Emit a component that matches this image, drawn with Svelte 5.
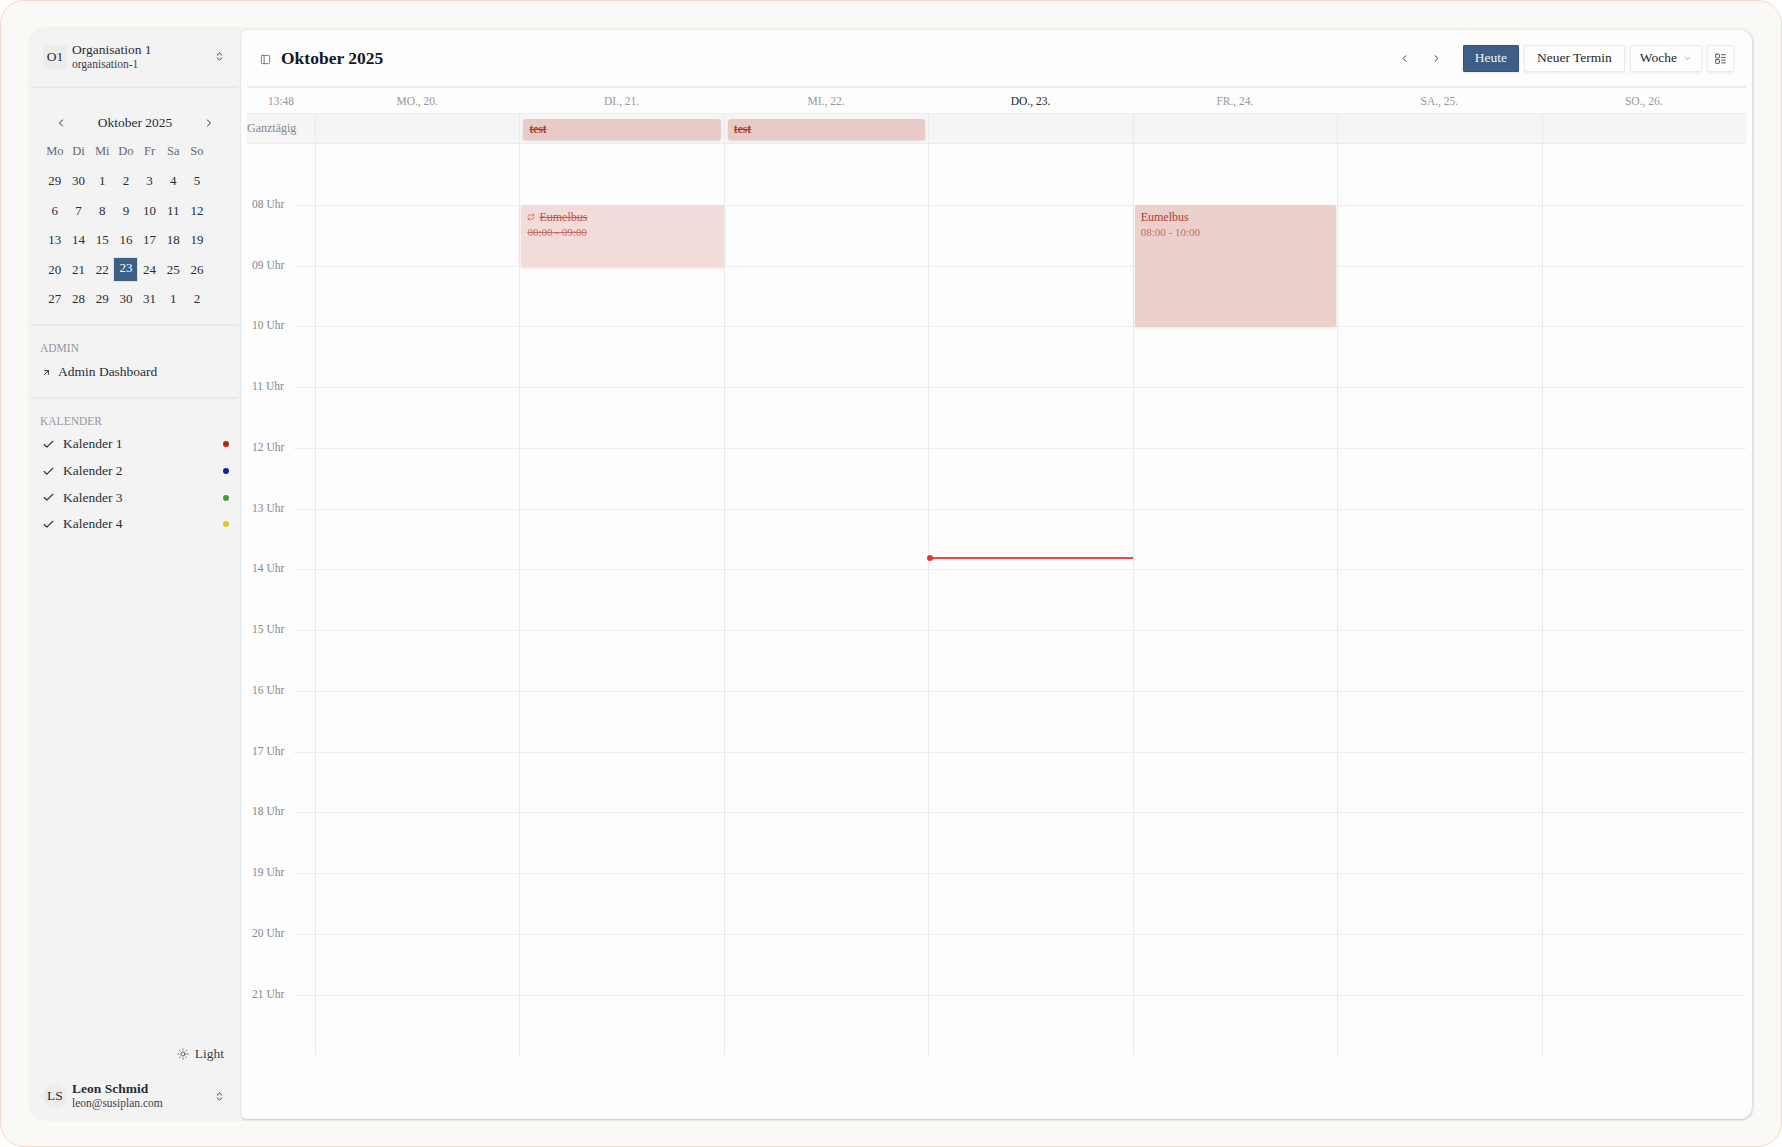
<script>
  const weekdays = ["Mo", "Di", "Mi", "Do", "Fr", "Sa", "So"]
  const weeks = [
    [29, 30, 1, 2, 3, 4, 5],
    [6, 7, 8, 9, 10, 11, 12],
    [13, 14, 15, 16, 17, 18, 19],
    [20, 21, 22, 23, 24, 25, 26],
    [27, 28, 29, 30, 31, 1, 2],
  ]
  const calendars = [
    { name: "Kalender 1", color: "#b5230f" },
    { name: "Kalender 2", color: "#0f1fa8" },
    { name: "Kalender 3", color: "#3fa52a" },
    { name: "Kalender 4", color: "#e2c521" },
  ]
  const days = [
    { label: "Mo., 20." },
    { label: "Di., 21.", allDay: true, events: [{ title: "Eumelbus", time: "08:00 - 09:00", start: 8, end: 9, cancelled: true }] },
    { label: "Mi., 22.", allDay: true },
    { label: "Do., 23.", today: true, now: 13.8 },
    { label: "Fr., 24.", events: [{ title: "Eumelbus", time: "08:00 - 10:00", start: 8, end: 10 }] },
    { label: "Sa., 25." },
    { label: "So., 26." },
  ]
  // grid starts at 07 Uhr, one row per hour
  const hours = Array.from({ length: 15 }, (_, i) => i + 7)
  const rowHeight = 60.75
  const top = (h) => (h - 7) * rowHeight
  const pad = (h) => String(h).padStart(2, "0")
</script>

<div class="frame">
  <div class="shell">
    <aside class="sidebar">
      <div class="switcher org">
        <span class="avatar">O1</span>
        <div class="who">
          <span class="who-name">Organisation 1</span>
          <span class="who-sub">organisation-1</span>
        </div>
        <svg class="updown" viewBox="0 0 24 24"><path d="m7 15 5 5 5-5M7 9l5-5 5 5" /></svg>
      </div>

      <section class="month">
        <div class="month-head">
          <svg class="nav-icon" viewBox="0 0 24 24"><path d="m15 18-6-6 6-6" /></svg>
          <span>Oktober 2025</span>
          <svg class="nav-icon" viewBox="0 0 24 24"><path d="m9 18 6-6-6-6" /></svg>
        </div>
        <div class="month-grid">
          {#each weekdays as d}
            <span class="wd">{d}</span>
          {/each}
          {#each weeks as week}
            {#each week as n}
              <span class="date" class:selected={n === 23}>{n}</span>
            {/each}
          {/each}
        </div>
      </section>

      <section class="group admin">
        <h4>Admin</h4>
        <div class="link">
          <svg viewBox="0 0 24 24"><path d="M7 7h10v10M7 17 17 7" /></svg>
          Admin Dashboard
        </div>
      </section>

      <section class="group cals">
        <h4>Kalender</h4>
        {#each calendars as cal}
          <div class="cal">
            <svg viewBox="0 0 24 24"><path d="M20 6 9 17l-5-5" /></svg>
            <span>{cal.name}</span>
            <i style="background: {cal.color}"></i>
          </div>
        {/each}
      </section>

      <div class="theme">
        <svg viewBox="0 0 24 24">
          <circle cx="12" cy="12" r="4" />
          <path d="M12 2v2M12 20v2M4.9 4.9l1.4 1.4M17.7 17.7l1.4 1.4M2 12h2M20 12h2M6.3 17.7l-1.4 1.4M19.1 4.9l-1.4 1.4" />
        </svg>
        Light
      </div>

      <div class="switcher user">
        <span class="avatar round">LS</span>
        <div class="who">
          <span class="who-name bold">Leon Schmid</span>
          <span class="who-sub">leon@susiplan.com</span>
        </div>
        <svg class="updown" viewBox="0 0 24 24"><path d="m7 15 5 5 5-5M7 9l5-5 5 5" /></svg>
      </div>
    </aside>

    <main class="main">
      <header class="top">
        <svg class="panel" viewBox="0 0 24 24">
          <rect x="3" y="3" width="18" height="18" rx="2" />
          <path d="M9 3v18" />
        </svg>
        <h1>Oktober 2025</h1>
        <div class="actions">
          <svg class="nav-icon" viewBox="0 0 24 24"><path d="m15 18-6-6 6-6" /></svg>
          <svg class="nav-icon" viewBox="0 0 24 24"><path d="m9 18 6-6-6-6" /></svg>
          <button class="btn primary">Heute</button>
          <button class="btn">Neuer Termin</button>
          <button class="btn woche">
            Woche
            <svg viewBox="0 0 24 24"><path d="m6 9 6 6 6-6" /></svg>
          </button>
          <button class="btn square" aria-label="Ansicht">
            <svg viewBox="0 0 24 24">
              <rect x="3" y="4" width="7" height="7" rx="1" />
              <rect x="3" y="14" width="7" height="7" rx="1" />
              <path d="M14 5h7M14 10h7M14 15h7M14 20h7" />
            </svg>
          </button>
        </div>
      </header>

      <div class="week">
        <div class="row day-row">
          <span class="clock">13:48</span>
          {#each days as day}
            <span class="day-label" class:today={day.today}>{day.label}</span>
          {/each}
        </div>

        <div class="row allday-row">
          <span class="allday-label">Ganztägig</span>
          {#each days as day}
            <div class="allday-cell">
              {#if day.allDay}
                <div class="allday-event">test</div>
              {/if}
            </div>
          {/each}
        </div>

        <div class="row body">
          <div class="times">
            {#each hours as h, i}
              <div class="time" class:first={i === 0}>
                {#if i > 0}<span>{pad(h)} Uhr</span>{/if}
              </div>
            {/each}
          </div>
          {#each days as day}
            <div class="column">
              {#each hours as h, i}
                <div class="slot" class:first={i === 0}></div>
              {/each}
              {#each day.events ?? [] as ev}
                <div
                  class="event"
                  class:cancelled={ev.cancelled}
                  style="top: {top(ev.start)}px; height: {top(ev.end) - top(ev.start) + 1}px"
                >
                  <div class="event-title">
                    {#if ev.cancelled}
                      <svg viewBox="0 0 24 24"><path d="m17 2 4 4-4 4M3 11V9a3 3 0 0 1 3-3h15M7 22l-4-4 4-4M21 13v2a3 3 0 0 1-3 3H3" /></svg>
                    {/if}
                    <span>{ev.title}</span>
                  </div>
                  <div class="event-time">{ev.time}</div>
                </div>
              {/each}
              {#if day.now}
                <div class="now" style="top: {top(day.now)}px"></div>
              {/if}
            </div>
          {/each}
        </div>
      </div>
    </main>
  </div>
</div>

<style>
  :global(body) {
    margin: 0;
    background: #fff;
  }

  .frame {
    box-sizing: border-box;
    width: 1782px;
    height: 1147px;
    padding: 26px 27px 25px 27px;
    background: #fbf9f6;
    border: 1px solid #f4d8cb;
    border-radius: 24px;
    font-family: "Liberation Serif", serif;
    color: #2a2d36;
  }

  .shell {
    display: flex;
    height: 100%;
    background: #f3f3f4;
    border-radius: 18px 12px 12px 18px;
  }

  svg {
    fill: none;
    stroke: currentColor;
    stroke-width: 2;
    stroke-linecap: round;
    stroke-linejoin: round;
    flex: none;
  }

  /* sidebar */
  .sidebar {
    display: flex;
    flex-direction: column;
    flex: none;
    width: 212px;
    padding: 0 2px 0 3px;
    box-sizing: border-box;
  }

  .switcher {
    display: flex;
    align-items: center;
    padding: 0 12px;
  }

  .org {
    height: 59px;
    border-bottom: 2px solid #e8e8e9;
  }

  .user {
    height: 40px;
    margin-bottom: 5px;
  }

  .avatar {
    display: flex;
    align-items: center;
    justify-content: center;
    flex: none;
    width: 24px;
    height: 24px;
    background: #ececed;
    border-radius: 2px;
    font-size: 13.5px;
  }

  .avatar.round {
    border-radius: 50%;
  }

  .who {
    display: flex;
    flex-direction: column;
    flex: 1;
    margin-left: 5px;
  }

  .who-name {
    font-size: 13.5px;
    line-height: 15px;
  }

  .who-name.bold {
    font-weight: 700;
  }

  .who-sub {
    font-size: 11.5px;
    line-height: 15px;
    color: #3d404a;
  }

  .updown {
    width: 11px;
    height: 11px;
    margin-right: 1px;
  }

  .month {
    padding: 26px 11px 0 12px;
    height: 238px;
    box-sizing: border-box;
    border-bottom: 2px solid #e8e8e9;
  }

  .month-head {
    display: flex;
    align-items: center;
    justify-content: space-between;
    height: 18px;
    padding: 0 12px 0 12px;
    font-size: 13.5px;
  }

  .nav-icon {
    width: 12px;
    height: 12px;
  }

  .month-grid {
    display: grid;
    grid-template-columns: repeat(7, 23.7px);
    grid-auto-rows: 29.5px;
    justify-items: center;
    align-items: center;
    margin-top: 5px;
    font-size: 13px;
  }

  .wd {
    color: #666870;
    font-size: 12.5px;
  }

  .date.selected {
    box-sizing: border-box;
    width: 25px;
    height: 25px;
    line-height: 20px;
    text-align: center;
    background: #3d5f85;
    border: 1px solid #dfe4ea;
    color: #fff;
  }

  .group h4 {
    margin: 0;
    font-size: 11.5px;
    font-weight: 400;
    line-height: 14px;
    color: #96979c;
    text-transform: uppercase;
  }

  .admin {
    height: 73px;
    padding: 15px 0 0 9px;
    box-sizing: border-box;
    border-bottom: 2px solid #e8e8e9;
  }

  .link {
    display: flex;
    align-items: center;
    gap: 7px;
    margin: 9px 0 0 2px;
    font-size: 13.5px;
    line-height: 16px;
  }

  .link svg {
    width: 9px;
    height: 9px;
    stroke-width: 2.6;
  }

  .cals {
    padding: 15px 9px 0 9px;
  }

  .cal {
    display: flex;
    align-items: center;
    height: 26.7px;
    font-size: 13.5px;
  }

  .cals h4 {
    margin-bottom: 3px;
  }

  .cal svg {
    width: 13px;
    height: 13px;
    margin: 0 8px 0 2px;
  }

  .cal span {
    flex: 1;
  }

  .cal i {
    width: 6px;
    height: 6px;
    border-radius: 50%;
  }

  .theme {
    display: flex;
    align-items: center;
    justify-content: flex-end;
    gap: 6px;
    margin-top: auto;
    padding: 0 14px 14px 0;
    font-size: 13.5px;
    color: #3d404a;
  }

  .theme svg {
    width: 12px;
    height: 12px;
    stroke-width: 1.6;
  }

  /* main */
  .main {
    flex: 1;
    margin: 3px 2px 2px 1px;
    padding: 0 6px;
    background: #fdfdfd;
    border-radius: 6px 12px 12px 6px;
    box-shadow: 0 1px 2px rgba(0, 0, 0, 0.16), 1px 0 3px rgba(0, 0, 0, 0.07);
  }

  .top {
    display: flex;
    align-items: center;
    height: 56px;
    padding: 0 12px 0 13px;
    border-bottom: 2px solid #f0f0f0;
  }

  .panel {
    width: 11px;
    height: 11px;
    margin-right: 10px;
    color: #666;
    stroke-width: 1.8;
    margin-top: 2px;
  }

  h1 {
    margin: 0;
    font-size: 17.5px;
    font-weight: 700;
    color: #15171c;
  }

  .actions {
    display: flex;
    align-items: center;
    margin-left: auto;
    gap: 5px;
  }

  .actions > .nav-icon {
    width: 11px;
    height: 11px;
    margin-right: 16px;
    color: #222;
  }

  .btn {
    display: flex;
    align-items: center;
    justify-content: center;
    box-sizing: border-box;
    height: 27px;
    padding: 0 12px;
    background: #fdfdfd;
    border: 1px solid #ebebeb;
    border-radius: 1px;
    box-shadow: 0 1px 3px rgba(0, 0, 0, 0.08);
    font: inherit;
    font-size: 13.5px;
    color: #26282f;
  }

  .btn.primary {
    width: 56px;
    background: #3d5f85;
    border-color: #35547a;
    color: #f4f6f8;
  }

  .woche {
    gap: 6px;
    padding: 0 9px;
  }

  .woche svg {
    width: 9px;
    height: 9px;
    color: #777;
    stroke-width: 1.6;
  }

  .square {
    width: 27px;
    padding: 0;
  }

  .square svg {
    width: 13px;
    height: 13px;
    color: #555;
    stroke-width: 1.8;
  }

  .row {
    display: grid;
    grid-template-columns: 68px repeat(7, 1fr);
  }

  .day-row {
    height: 25px;
    align-items: center;
    text-align: center;
    font-size: 11.5px;
    color: #96979c;
  }

  .clock {
    padding-left: 0;
  }

  .day-label {
    text-transform: uppercase;
  }

  .day-label.today {
    color: #1f2128;
  }

  .allday-row {
    height: 31px;
    background: #f5f5f5;
    border-top: 1px solid #eeeeee;
    border-bottom: 1px solid #ececec;
    box-sizing: border-box;
  }

  .allday-label {
    align-self: center;
    font-size: 12px;
    color: #85868c;
  }

  .allday-cell {
    border-left: 1px solid #e9e9e9;
    padding: 5px 3px 0 3px;
  }

  .allday-event {
    box-sizing: border-box;
    height: 21px;
    padding: 0 6px;
    line-height: 20px;
    background: #e8cbc7;
    border-radius: 3px;
    box-shadow: 0 1px 2px rgba(160, 60, 50, 0.15);
    font-size: 11.5px;
    font-weight: 700;
    color: #b23a2e;
    text-decoration: line-through;
  }

  .time {
    position: relative;
    box-sizing: border-box;
    height: 60.75px;
  }

  .time:not(.first)::after {
    content: "";
    position: absolute;
    top: 0;
    left: 47px;
    right: 0;
    height: 1px;
    background: #eeeeee;
  }

  .time span {
    position: absolute;
    top: -8px;
    left: 5px;
    font-size: 11.5px;
    line-height: 15px;
    color: #85868c;
  }

  .column {
    position: relative;
    border-left: 1px solid #e9e9e9;
  }

  .slot {
    box-sizing: border-box;
    height: 60.75px;
    border-top: 1px solid #eeeeee;
  }

  .slot.first {
    border-top: 0;
  }

  .event {
    position: absolute;
    left: 1px;
    right: 1px;
    box-sizing: border-box;
    padding: 5px 6px;
    background: #ecd0cc;
    border-radius: 3px;
    box-shadow: 0 1px 3px rgba(160, 60, 50, 0.16);
    color: #b23a2e;
  }

  .event.cancelled {
    left: 1px;
    right: -1px;
    background: #f2dcd9;
    color: #c4574c;
  }

  .event-title {
    display: flex;
    align-items: center;
    gap: 4px;
    font-size: 12px;
    line-height: 14px;
  }

  .event-title svg {
    width: 8px;
    height: 8px;
    stroke-width: 2;
  }

  .event-time {
    margin-top: 1px;
    font-size: 11px;
    line-height: 14px;
    color: #cc6b60;
  }

  .cancelled .event-title span,
  .cancelled .event-time {
    text-decoration: line-through;
  }

  .now {
    position: absolute;
    left: 0;
    right: 0;
    height: 2px;
    background: #ef4444;
  }

  .now::before {
    content: "";
    position: absolute;
    left: -2px;
    top: -2px;
    width: 6px;
    height: 6px;
    background: #ef3030;
    border-radius: 50%;
  }
</style>
